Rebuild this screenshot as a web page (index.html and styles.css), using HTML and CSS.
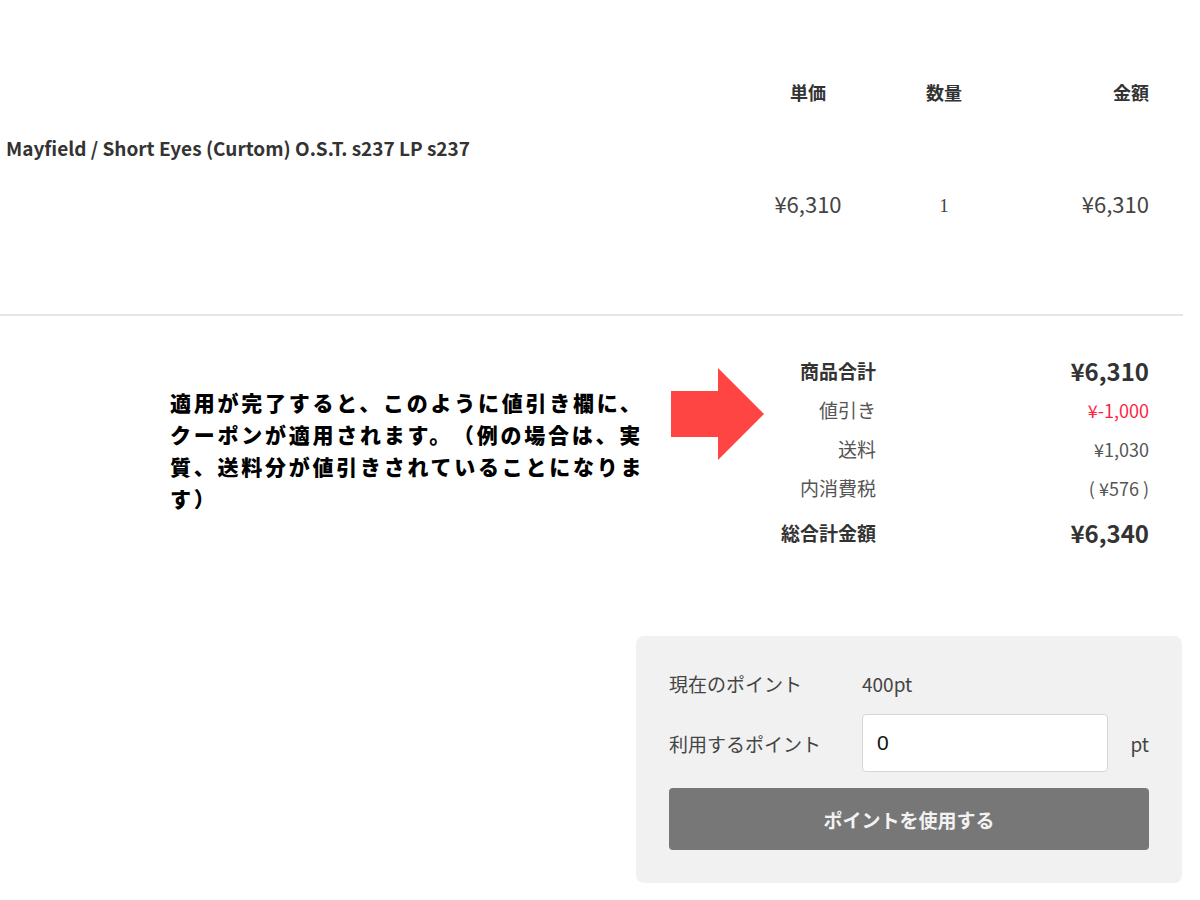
FILE: index.html
```html
<!DOCTYPE html>
<html lang="ja">
<head>
<meta charset="utf-8">
<title>カート</title>
<link rel="stylesheet" href="styles.css">
</head>
<body>
<div class="page">
  <section class="items">
    <div class="row head">
      <div class="c-name"></div>
      <div class="c-price">単価</div>
      <div class="c-qty">数量</div>
      <div class="c-total">金額</div>
    </div>
    <div class="item-name">Mayfield / Short Eyes (Curtom) O.S.T. s237 LP s237</div>
    <div class="row body">
      <div class="c-name"></div>
      <div class="c-price">¥6,310</div>
      <div class="c-qty qty">1</div>
      <div class="c-total">¥6,310</div>
    </div>
  </section>

  <section class="summary-wrap">
    <div class="note">
      <p class="note-text">適用が完了すると、このように値引き欄に、クーポンが適用されます。（例の場合は、実質、送料分が値引きされていることになります）</p>
      <svg class="arrow" width="93" height="92" viewBox="0 0 93 92"><polygon points="0,23 47,23 47,0 93,46 47,92 47,69 0,69" fill="#ff4444"/></svg>
    </div>
    <div class="summary">
      <div class="s-label strong">商品合計</div><div class="s-val strong big">¥6,310</div>
      <div class="s-label">値引き</div><div class="s-val red">¥-1,000</div>
      <div class="s-label">送料</div><div class="s-val">¥1,030</div>
      <div class="s-label">内消費税</div><div class="s-val">( ¥576 )</div>
      <div class="s-label strong last">総合計金額</div><div class="s-val strong big last">¥6,340</div>
    </div>
  </section>

  <section class="points">
    <div class="p-grid">
      <div class="p-label">現在のポイント</div>
      <div class="p-now">400pt</div>
      <div></div>
      <div class="p-label">利用するポイント</div>
      <input class="p-input" type="text" value="0">
      <div class="p-unit">pt</div>
    </div>
    <button class="p-btn" type="button">ポイントを使用する</button>
  </section>
</div>
</body>
</html>
```

FILE: styles.css
```css
* { box-sizing: border-box; }
html, body { margin: 0; padding: 0; background: #fff; }
body {
  font-family: "Noto Sans CJK JP", "Noto Sans", sans-serif;
  color: #333;
  width: 1200px;
}
.page { width: 1183px; }

.items {
  padding-top: 78px;
  border-bottom: 2px solid #e6e6e6;
  padding-bottom: 96px;
}
.row {
  display: grid;
  grid-template-columns: 1fr 120px 152px 129px;
  padding-right: 34px;
}
.head {
  font-size: 18px;
  font-weight: 700;
  line-height: 28px;
  color: #333;
}
.c-price, .c-qty { text-align: center; }
.c-total { text-align: right; }
.item-name {
  margin-top: 28px;
  padding-left: 6px;
  font-size: 19px;
  font-weight: 700;
  line-height: 28px;
  color: #333;
}
.body {
  margin-top: 26px;
  grid-template-rows: 30px;
  font-size: 22px;
  line-height: 30px;
  color: #444;
}
.qty { font-family: "Liberation Serif", serif; font-size: 19px; padding-top: 3px; }

.summary-wrap {
  display: flex;
  padding-top: 35px;
}
.note {
  display: flex;
  align-items: flex-start;
  padding-left: 170px;
  width: 770px;
}
.note-text {
  margin: 35px 0 0;
  width: 484px;
  font-size: 21px;
  line-height: 32px;
  font-weight: 900;
  letter-spacing: 2.75px;
  text-spacing-trim: space-all;
  font-feature-settings: "fwid";
  color: #000;
}
.arrow { margin: 17px 0 0 17px; flex: none; }

.summary {
  display: grid;
  grid-template-columns: 106px 273px;
  grid-auto-rows: 39px;
  align-items: center;
  font-size: 18px;
  color: #555;
}
.s-label { text-align: right; font-size: 19px; }
.s-val { text-align: right; }
.strong { font-weight: 700; color: #333; }
.big { font-size: 24px; }
.red { color: #ff1f44; }
.last { margin-top: 12px; }

.points {
  margin: 90px 0 0 636px;
  width: 546px;
  background: #f1f1f1;
  border-radius: 8px;
  padding: 29px 33px 33px;
}
.p-grid {
  display: grid;
  grid-template-columns: 193px 246px 1fr;
  grid-template-rows: 36px 58px;
  row-gap: 13px;
  align-items: center;
  font-size: 19px;
  color: #444;
}
.p-now { font-size: 19px; }
.p-input {
  width: 246px;
  height: 58px;
  border: 1px solid #d6d6d6;
  border-radius: 4px;
  background: #fff;
  padding: 0 14px;
  font-family: "Liberation Sans", sans-serif;
  font-size: 21px;
  color: #111;
}
.p-unit { justify-self: end; }
.p-btn {
  display: block;
  margin-top: 16px;
  width: 100%;
  height: 62px;
  border: 0;
  border-radius: 4px;
  background: #777;
  color: #f2f2f2;
  font-family: "Noto Sans CJK JP", sans-serif;
  font-size: 19px;
  font-weight: 700;
}
```
